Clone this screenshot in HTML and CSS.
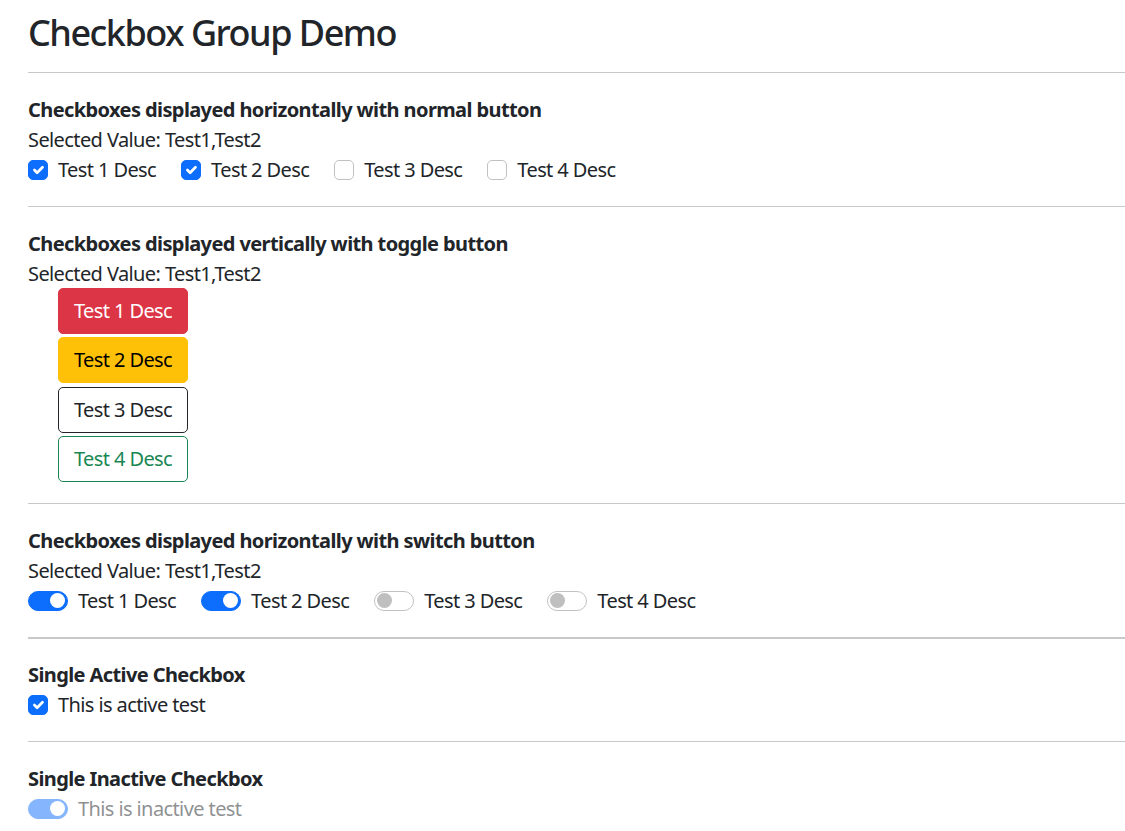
FILE: index.html
```html
<!DOCTYPE html>
<html>
<head>
<meta charset="utf-8">
<link rel="stylesheet" href="styles.css">
</head>
<body>
<div class="page">
  <h1 class="title">Checkbox Group Demo</h1>
  <hr class="rule">
  <section class="block">
    <h6 class="heading">Checkboxes displayed horizontally with normal button</h6>
    <div class="value">Selected Value: Test1,Test2</div>
    <div class="row-inline">
      <label class="check"><span class="box on"></span>Test 1 Desc</label>
      <label class="check"><span class="box on"></span>Test 2 Desc</label>
      <label class="check"><span class="box"></span>Test 3 Desc</label>
      <label class="check"><span class="box"></span>Test 4 Desc</label>
    </div>
  </section>
  <hr class="rule">
  <section class="block">
    <h6 class="heading">Checkboxes displayed vertically with toggle button</h6>
    <div class="value">Selected Value: Test1,Test2</div>
    <div class="btn-stack">
      <span class="btn btn-red">Test 1 Desc</span>
      <span class="btn btn-yellow">Test 2 Desc</span>
      <span class="btn btn-dark">Test 3 Desc</span>
      <span class="btn btn-green">Test 4 Desc</span>
    </div>
  </section>
  <hr class="rule">
  <section class="block">
    <h6 class="heading">Checkboxes displayed horizontally with switch button</h6>
    <div class="value">Selected Value: Test1,Test2</div>
    <div class="row-inline">
      <label class="check switch-item"><span class="switch on"></span>Test 1 Desc</label>
      <label class="check switch-item"><span class="switch on"></span>Test 2 Desc</label>
      <label class="check switch-item"><span class="switch"></span>Test 3 Desc</label>
      <label class="check switch-item"><span class="switch"></span>Test 4 Desc</label>
    </div>
  </section>
  <hr class="rule thick">
  <section class="block">
    <h6 class="heading">Single Active Checkbox</h6>
    <div class="row-inline">
      <label class="check"><span class="box on"></span>This is active test</label>
    </div>
  </section>
  <hr class="rule">
  <section class="block">
    <h6 class="heading">Single Inactive Checkbox</h6>
    <div class="row-inline">
      <label class="check switch-item disabled"><span class="switch on"></span>This is inactive test</label>
    </div>
  </section>
</div>
</body>
</html>
```

FILE: styles.css
```css
* { box-sizing: border-box; }
html, body { margin: 0; padding: 0; }
body {
  font-family: "Segoe UI", "Noto Sans", "Open Sans", sans-serif;
  font-size: 20px;
  line-height: 1.5;
  letter-spacing: -0.6px;
  color: #212529;
  background: #fff;
  overflow: hidden;
}
.page {
  padding: 9px 0 0 28px;
}
.title {
  font-size: 36px;
  font-weight: 500;
  line-height: 48px;
  letter-spacing: -1.5px;
  margin: 0 0 15px 0;
}
.rule {
  border: 0;
  border-top: 1px solid #c7c8c9;
  margin: 0 0 25px 0;
}
.rule.thick { border-top-width: 2px; margin-bottom: 24px; }
.block { padding-bottom: 21px; }
.heading {
  font-size: 20px;
  font-weight: 700;
  line-height: 24px;
  margin: 0 0 3px 0;
}
.value { line-height: 30px; }
.row-inline {
  display: flex;
  flex-wrap: wrap;
  gap: 25px;
  line-height: 30px;
}
.check {
  display: flex;
  align-items: center;
  gap: 10px;
  color: #212529;
}
.box {
  width: 20px;
  height: 20px;
  border: 1px solid #bfc2c5;
  border-radius: 5px;
  background: #fff;
  flex: none;
}
.box.on {
  background: #0d6efd;
  border-color: #0d6efd;
  background-image: url("data:image/svg+xml,%3csvg xmlns='http://www.w3.org/2000/svg' viewBox='0 0 20 20'%3e%3cpath fill='none' stroke='%23fff' stroke-linecap='round' stroke-linejoin='round' stroke-width='3' d='m6 10 3 3 6-6'/%3e%3c/svg%3e");
  background-size: 100% 100%;
}
.switch {
  width: 40px;
  height: 20px;
  border: 1px solid #bfc2c5;
  border-radius: 10px;
  background: #fff;
  position: relative;
  flex: none;
}
.switch::after {
  content: "";
  position: absolute;
  left: 2px;
  top: 1.5px;
  width: 15px;
  height: 15px;
  border-radius: 50%;
  background: #bfbfbf;
}
.switch.on {
  background: #0d6efd;
  border-color: #0d6efd;
}
.switch.on::after {
  left: auto;
  right: 2px;
  background: #fff;
}
.disabled { opacity: 0.5; }
.btn-stack {
  display: flex;
  flex-direction: column;
  align-items: flex-start;
  gap: 3.3px;
  margin-top: -1px;
  padding: 0 0 0 30px;
}
.btn {
  display: inline-block;
  padding: 7px 15px;
  line-height: 30px;
  border: 1px solid transparent;
  border-radius: 5px;
  font-size: 20px;
}
.btn-red { background: #dc3545; border-color: #dc3545; color: #fff; }
.btn-yellow { background: #ffc107; border-color: #ffc107; color: #000; }
.btn-dark { background: #fff; border-color: #212529; color: #212529; }
.btn-green { background: #fff; border-color: #198754; color: #198754; }
```
